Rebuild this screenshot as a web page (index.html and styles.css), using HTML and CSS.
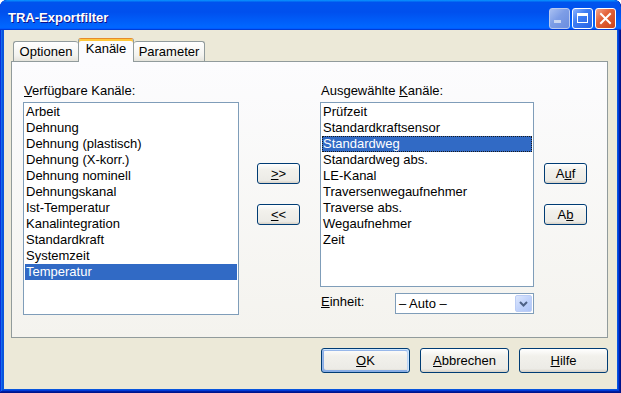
FILE: index.html
```html
<!DOCTYPE html>
<html>
<head>
<meta charset="utf-8">
<title>TRA-Exportfilter</title>
<link rel="stylesheet" href="styles.css">
</head>
<body>
<div class="window">
  <div class="titlebar">
    <span class="title">TRA-Exportfilter</span>
    <div class="tcontrols">
      <span class="tbtn tmin"><svg width="21" height="21" viewBox="0 0 21 21"><rect x="5" y="12" width="7" height="3" fill="#c9d6f2"/></svg></span>
      <span class="tbtn tmax"><svg width="21" height="21" viewBox="0 0 21 21"><rect x="5.5" y="5.5" width="10" height="9" fill="none" stroke="#fff"/><rect x="5" y="5" width="11" height="3" fill="#fff"/></svg></span>
      <span class="tbtn tclose"><svg width="21" height="21" viewBox="0 0 21 21"><path d="M6 6 L15 15 M15 6 L6 15" stroke="#fff" stroke-width="2" stroke-linecap="square"/></svg></span>
    </div>
  </div>
  <div class="client">
    <div class="tabs">
      <div class="tab t1">Optionen</div>
      <div class="tab sel t2">Kanäle</div>
      <div class="tab t3">Parameter</div>
    </div>
    <div class="panel">
      <div class="col lcol">
        <div class="lbl"><u>V</u>erfügbare Kanäle:</div>
        <div class="list llist">
          <div class="item">Arbeit</div>
          <div class="item">Dehnung</div>
          <div class="item">Dehnung (plastisch)</div>
          <div class="item">Dehnung (X-korr.)</div>
          <div class="item">Dehnung nominell</div>
          <div class="item">Dehnungskanal</div>
          <div class="item">Ist-Temperatur</div>
          <div class="item">Kanalintegration</div>
          <div class="item">Standardkraft</div>
          <div class="item">Systemzeit</div>
          <div class="item selected">Temperatur</div>
        </div>
      </div>
      <div class="btncol mid">
        <button class="btn small"><u>&gt;</u>&gt;</button>
        <button class="btn small"><u>&lt;</u>&lt;</button>
      </div>
      <div class="col rcol">
        <div class="lbl">Ausgewählte <u>K</u>anäle:</div>
        <div class="list rlist">
          <div class="item">Prüfzeit</div>
          <div class="item">Standardkraftsensor</div>
          <div class="item selected focus">Standardweg</div>
          <div class="item">Standardweg abs.</div>
          <div class="item">LE-Kanal</div>
          <div class="item">Traversenwegaufnehmer</div>
          <div class="item">Traverse abs.</div>
          <div class="item">Wegaufnehmer</div>
          <div class="item">Zeit</div>
        </div>
        <div class="unit">
          <span class="ulbl"><u>E</u>inheit:</span>
          <div class="combo">
            <span class="ctext">– Auto –</span>
            <span class="carrow"><svg width="15" height="15" viewBox="0 0 15 15"><path d="M4 6 L7.5 9.5 L11 6" fill="none" stroke="#4d6185" stroke-width="2"/></svg></span>
          </div>
        </div>
      </div>
      <div class="btncol side">
        <button class="btn small">A<u>u</u>f</button>
        <button class="btn small">A<u>b</u></button>
      </div>
    </div>
    <div class="footer">
      <button class="btn big default"><u>O</u>K</button>
      <button class="btn big"><u>A</u>bbrechen</button>
      <button class="btn big"><u>H</u>ilfe</button>
    </div>
  </div>
</div>
</body>
</html>
```

FILE: styles.css
```css
html, body {
  margin: 0;
  padding: 0;
  background: #ffffff;
}
body {
  width: 621px;
  height: 393px;
  overflow: hidden;
  font-family: "Liberation Sans", Arial, sans-serif;
  font-size: 13px;
  color: #000;
}
.window {
  width: 621px;
  height: 393px;
  display: flex;
  flex-direction: column;
  background: #0855dd;
  box-shadow: inset -1px -1px #00138c, inset 1px 1px #0831d9, inset -2px -2px #001ea0, inset 2px 2px #166aee, inset -3px -3px #003bda, inset 3px 3px #0855dd;
  border-radius: 7px 7px 0 0;
  overflow: hidden;
}
.titlebar {
  height: 30px;
  flex: none;
  display: flex;
  align-items: flex-start;
  background: linear-gradient(180deg, #0997ff, #0053ee 8%, #0050ee 40%, #0066ff 88%, #0066ff 93%, #005bff 95%, #003dd7 96%, #003dd7);
  border-radius: 7px 7px 0 0;
}
.title {
  margin: 10px 0 0 8px;
  line-height: 16px;
  font-weight: bold;
  font-size: 13px;
  color: #fff;
  text-shadow: 1px 1px #0f1089;
  letter-spacing: 0;
}
.tcontrols {
  margin: 8px 5px 0 auto;
  display: flex;
  gap: 2px;
}
.tbtn {
  width: 21px;
  height: 21px;
  box-sizing: border-box;
  border: 1px solid #fff;
  border-radius: 3px;
  display: flex;
  align-items: center;
  justify-content: center;
  overflow: hidden;
}
.tbtn svg {
  flex: none;
  margin: -1px;
}
.tmin {
  border-color: #b9c9ef;
  background: linear-gradient(135deg, #a9c0f2 0%, #7d9de6 45%, #6a8ddf 100%);
}
.tmax {
  background: linear-gradient(135deg, #8fb4ff 0%, #3f7df2 40%, #2663e6 100%);
}
.tclose {
  background: linear-gradient(135deg, #f2a58c 0%, #e4633b 40%, #cb4419 100%);
}
.client {
  flex: 1;
  margin: 0 4px 4px 4px;
  background: #ece9d8;
  display: flex;
  flex-direction: column;
}
.tabs {
  margin: 8px 0 0 9px;
  height: 23px;
  display: flex;
  align-items: flex-end;
}
.tab {
  box-sizing: border-box;
  height: 20px;
  border: 1px solid #919b9c;
  border-bottom: none;
  border-radius: 3px 3px 0 0;
  background: linear-gradient(180deg, #ffffff, #f3f3ef 70%, #e5e4dc);
  text-align: center;
  line-height: 16px;
  padding-top: 2px;
}
.t1 { width: 65px; border-right: none; }
.t2 { width: 56px; }
.t3 { width: 71px; border-left: none; }
.tab.sel {
  height: 24px;
  margin-bottom: -1px;
  position: relative;
  z-index: 1;
  background: #fcfcfe;
  border-top: 1px solid #e68b2c;
  box-shadow: inset 0 2px #ffc83c;
  padding-top: 2px;
}
.panel {
  box-sizing: border-box;
  height: 277px;
  margin: 0 9px 0 7px;
  border: 1px solid #919b9c;
  background: linear-gradient(180deg, #fcfcfe, #f4f3ee);
  display: flex;
  align-items: flex-start;
  padding: 21px 0 0 11px;
}
.col {
  display: flex;
  flex-direction: column;
}
.lcol { width: 216px; }
.rcol { width: 214px; margin-left: 20px; }
.lbl {
  line-height: 16px;
  height: 16px;
  padding-left: 1px;
  margin-bottom: 3px;
  white-space: nowrap;
}
.list {
  box-sizing: border-box;
  border: 1px solid #7f9db9;
  background: #fff;
  padding: 1px;
}
.llist { height: 213px; }
.rlist { height: 185px; }
.item {
  height: 16px;
  line-height: 16px;
  padding-left: 1px;
  white-space: nowrap;
}
.item.selected {
  background: #316ac5;
  color: #fff;
}
.item.focus {
  outline: 1px dotted #1a1a1a;
  outline-offset: -1px;
}
.btncol {
  display: flex;
  flex-direction: column;
  gap: 20px;
  padding-top: 80px;
  width: 43px;
}
.mid { margin-left: 18px; }
.side { margin-left: 10px; }
.btn {
  box-sizing: border-box;
  font-family: "Liberation Sans", Arial, sans-serif;
  font-size: 13px;
  color: #000;
  border: 1px solid #003c74;
  border-radius: 3px;
  background: linear-gradient(180deg, #ffffff, #f2f1ec 30%, #ecebe6 86%, #d6d0c5);
  display: flex;
  align-items: center;
  justify-content: center;
  padding: 0;
  margin: 0;
  line-height: 16px;
}
.btn.small {
  width: 43px;
  height: 21px;
}
.btn.big {
  width: 89px;
  height: 25px;
}
.btn.default {
  box-shadow: inset -1px 1px #cee7ff, inset 1px 2px #98b8ea, inset -2px 2px #bcd4f6, inset 1px -1px #89ade4, inset 2px -2px #89ade4;
}
.unit {
  margin-top: 6px;
  display: flex;
  align-items: flex-start;
}
.ulbl {
  width: 74px;
  padding-left: 1px;
  line-height: 16px;
  padding-top: 1px;
}
.combo {
  box-sizing: border-box;
  width: 139px;
  height: 21px;
  border: 1px solid #7f9db9;
  background: #fff;
  display: flex;
  align-items: center;
  padding: 1px;
}
.ctext {
  flex: 1;
  padding-left: 2px;
  line-height: 16px;
}
.carrow {
  box-sizing: border-box;
  width: 17px;
  height: 17px;
  border: 1px solid #bccdf5;
  border-radius: 2px;
  background: linear-gradient(135deg, #dde7fd, #c1d3fb 50%, #aec5f7);
  display: flex;
  align-items: center;
  justify-content: center;
}
.footer {
  margin: 10px 9px 0 0;
  display: flex;
  justify-content: flex-end;
  gap: 10px;
}
u {
  text-decoration: underline;
  text-underline-offset: 1px;
}
```
